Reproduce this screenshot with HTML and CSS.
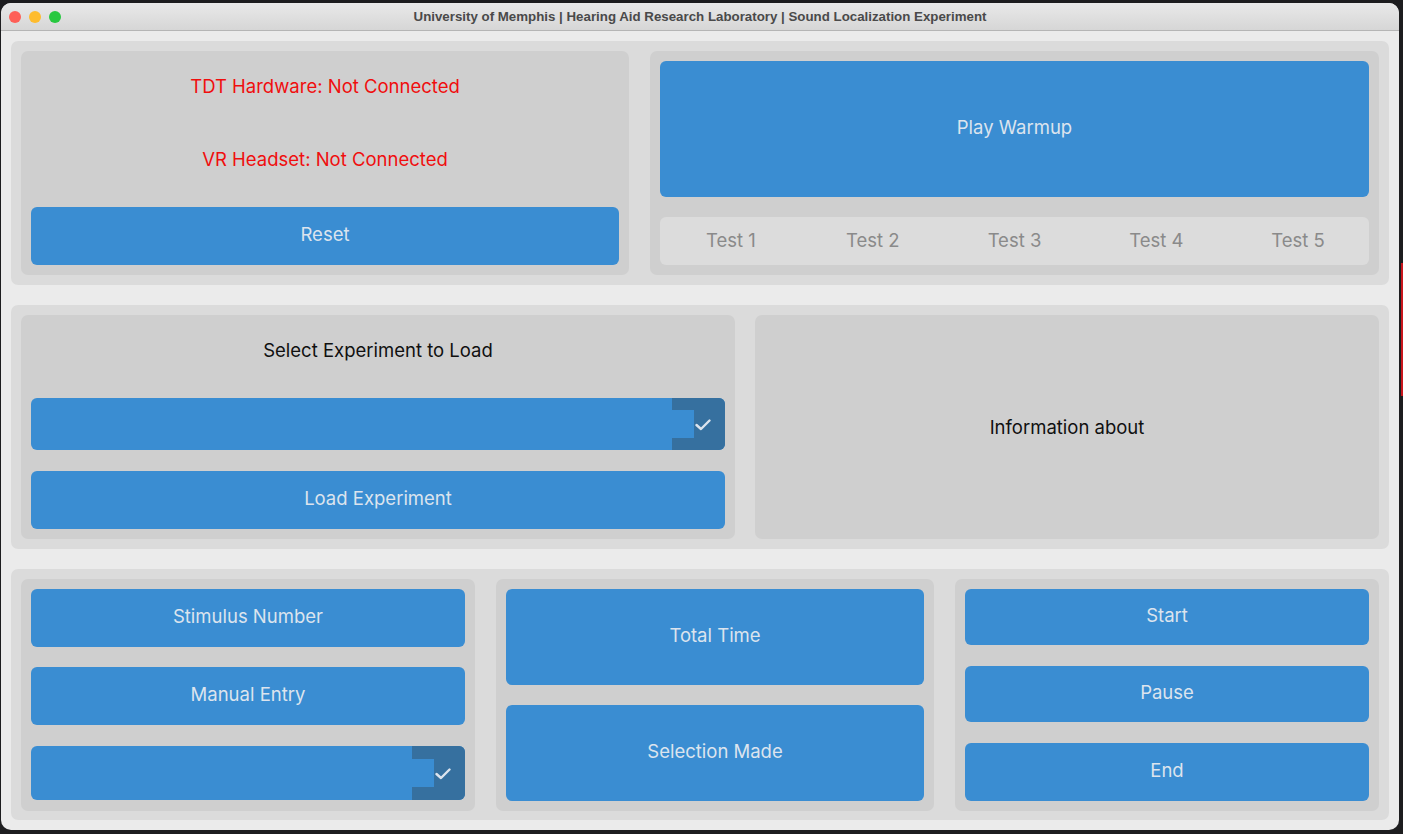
FILE: index.html
```html
<!DOCTYPE html>
<html>
<head>
<meta charset="utf-8">
<link rel="stylesheet" href="styles.css">
</head>
<body>
<div class="desk">
  <div class="window">
    <div class="titlebar">
      <div class="lights">
        <span class="light red"></span><span class="light yellow"></span><span class="light green"></span>
      </div>
      <div class="title">University of Memphis | Hearing Aid Research Laboratory | Sound Localization Experiment</div>
    </div>
    <div class="content">
      <section class="sec sec1">
        <div class="panel col">
          <div class="label red-text h50">TDT Hardware: Not Connected</div>
          <div class="label red-text h50 mt23">VR Headset: Not Connected</div>
          <div class="btn h58 mt23">Reset</div>
        </div>
        <div class="panel col">
          <div class="btn h136">Play Warmup</div>
          <div class="tabs mt20">
            <span>Test 1</span><span>Test 2</span><span>Test 3</span><span>Test 4</span><span>Test 5</span>
          </div>
        </div>
      </section>

      <section class="sec sec2">
        <div class="panel col">
          <div class="label dark-text h50">Select Experiment to Load</div>
          <div class="combo h52 mt23">
            <div class="entry"></div>
            <div class="arrow">
              <div class="ext"></div>
              <svg class="check" width="16" height="12" viewBox="0 0 16 12"><polyline points="1.5,6 6,10 14.5,1.5" fill="none" stroke="#dce4ee" stroke-width="2.4" stroke-linecap="round" stroke-linejoin="round"/></svg>
            </div>
          </div>
          <div class="btn h58 mt21">Load Experiment</div>
        </div>
        <div class="panel info">
          <div class="label dark-text">Information about</div>
        </div>
      </section>

      <section class="sec sec3">
        <div class="panel col">
          <div class="btn h58">Stimulus Number</div>
          <div class="btn h58 mt20">Manual Entry</div>
          <div class="combo h54 mt21">
            <div class="entry"></div>
            <div class="arrow">
              <div class="ext"></div>
              <svg class="check" width="16" height="12" viewBox="0 0 16 12"><polyline points="1.5,6 6,10 14.5,1.5" fill="none" stroke="#dce4ee" stroke-width="2.4" stroke-linecap="round" stroke-linejoin="round"/></svg>
            </div>
          </div>
        </div>
        <div class="panel col">
          <div class="btn h96">Total Time</div>
          <div class="btn h96 mt20">Selection Made</div>
        </div>
        <div class="panel col">
          <div class="btn h56">Start</div>
          <div class="btn h56 mt21">Pause</div>
          <div class="btn h58 mt21">End</div>
        </div>
      </section>
    </div>
  </div>
  <div class="redstrip"></div>
</div>
</body>
</html>
```
FILE: styles.css
```css
html, body {
  margin: 0;
  padding: 0;
  background: #1d1d1f;
  width: 1403px;
  height: 834px;
  overflow: hidden;
}
.desk {
  position: relative;
  padding: 3px 0 0 1px;
  font-family: Inter, "Noto Sans", Roboto, sans-serif;
}
.window {
  width: 1398px;
  height: 827px;
  border-radius: 10px;
  overflow: hidden;
  background: #ebebeb;
  display: flex;
  flex-direction: column;
}
.titlebar {
  height: 27px;
  flex: none;
  background: linear-gradient(#e9e9e9, #d6d6d6);
  border-bottom: 1px solid #b5b5b5;
  position: relative;
  display: flex;
  align-items: center;
  justify-content: center;
}
.lights {
  position: absolute;
  left: 8px;
  top: 8px;
  display: flex;
  gap: 8px;
}
.light {
  width: 12px;
  height: 12px;
  border-radius: 50%;
  display: block;
}
.red { background: #fe5f57; }
.yellow { background: #febc2e; }
.green { background: #28c840; }
.title {
  font-family: "Liberation Sans", Arial, sans-serif;
  font-weight: bold;
  font-size: 13.3px;
  color: #4a4a4a;
}
.content {
  flex: 1;
  padding: 10px;
  display: flex;
  flex-direction: column;
  gap: 20px;
}
.sec {
  background: #dbdbdb;
  border-radius: 7px;
  padding: 10px;
  display: grid;
  gap: 21px;
}
.sec1 { grid-template-columns: 608px 1fr; height: 224px; }
.sec2 { grid-template-columns: 714px 1fr; height: 224px; gap: 20px; }
.sec3 { grid-template-columns: 454px 438px 1fr; height: 231px; }
.panel {
  background: #cfcfcf;
  border-radius: 7px;
  padding: 10px;
}
.col {
  display: flex;
  flex-direction: column;
}
.info {
  display: flex;
  align-items: center;
  justify-content: center;
}
.label {
  display: flex;
  align-items: center;
  justify-content: center;
  font-size: 18.5px;
}
.red-text { color: #f00e0e; }
.dark-text { color: #101010; }
.btn {
  background: #3a8dd2;
  border-radius: 6px;
  color: #dce4ee;
  font-size: 18.5px;
  display: flex;
  align-items: center;
  justify-content: center;
  flex: none;
  box-sizing: border-box;
  padding-bottom: 4px;
}
.h50 { height: 50px; }
.h52 { height: 52px; }
.h54 { height: 54px; }
.h56 { height: 56px; }
.h58 { height: 58px; }
.h96 { height: 96px; }
.h136 { height: 136px; }
.mt20 { margin-top: 20px; }
.mt21 { margin-top: 21px; }
.mt23 { margin-top: 23px; }
.tabs {
  height: 48px;
  box-sizing: border-box;
  padding-bottom: 2px;
  background: #dcdcdc;
  border-radius: 6px;
  display: grid;
  grid-template-columns: repeat(5, 1fr);
  align-items: center;
  justify-items: center;
  color: #8a8a8a;
  font-size: 18.5px;
}
.combo {
  display: flex;
  background: #3a8dd2;
  border-radius: 6px;
  overflow: hidden;
  flex: none;
}
.entry { flex: 1; }
.arrow {
  width: 53px;
  background: #36709f;
  display: flex;
  align-items: center;
}
.ext {
  width: 22px;
  height: 28px;
  background: #3a8dd2;
  flex: none;
}
.check {
  margin-left: 1px;
  margin-top: 2px;
}
.redstrip {
  position: absolute;
  left: 1401px;
  top: 263px;
  width: 2px;
  height: 133px;
  background: #c8161d;
}
```
